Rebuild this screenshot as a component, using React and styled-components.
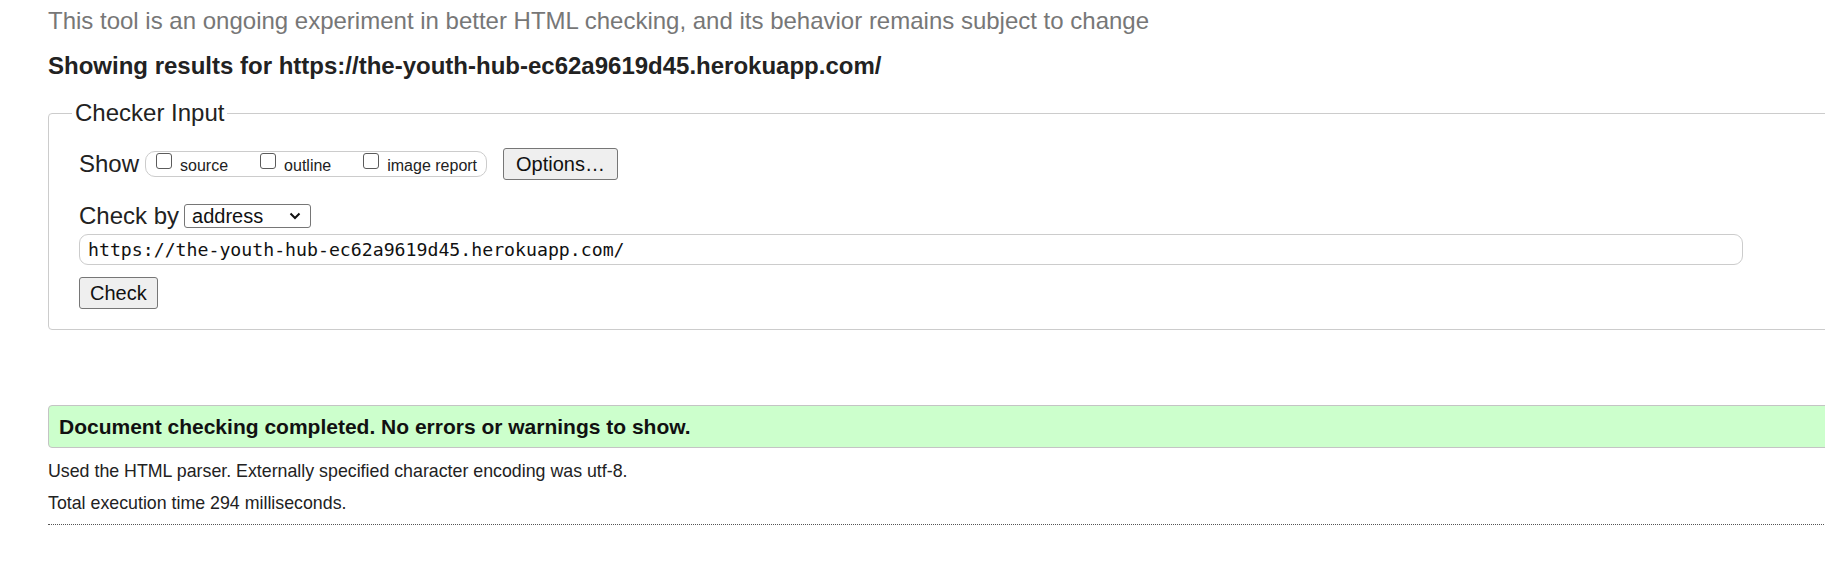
import React from "react";
import styled, { createGlobalStyle } from "styled-components";

const GlobalStyle = createGlobalStyle`
  html, body {
    margin: 0;
    padding: 0;
    background: #fff;
    overflow: hidden;
  }
  body {
    font-family: "Liberation Sans", Arial, sans-serif;
    color: #222;
  }
`;

const checkboxes = ["source", "outline", "image report"];
const url = "https://the-youth-hub-ec62a9619d45.herokuapp.com/";

const App = () => {
  return (
    <Page>
      <GlobalStyle />
      <Intro>
        This tool is an ongoing experiment in better HTML checking, and its
        behavior remains subject to change
      </Intro>
      <Heading>Showing results for {url}</Heading>
      <Fieldset>
        <Legend>Checker Input</Legend>
        <ShowRow>
          <Label>Show</Label>
          <Pill>
            {checkboxes.map((item) => (
              <Option key={item}>
                <Box type="checkbox" />
                <OptionText>{item}</OptionText>
              </Option>
            ))}
          </Pill>
          <Button wide>Options…</Button>
        </ShowRow>
        <CheckByRow>
          <Label>Check by</Label>
          <SelectWrap>
            <Select defaultValue="address">
              <option value="address">address</option>
              <option value="file">file upload</option>
              <option value="text">text input</option>
            </Select>
            <Chevron viewBox="0 0 12 8">
              <path d="M1.5 1.5 L6 6 L10.5 1.5" />
            </Chevron>
          </SelectWrap>
        </CheckByRow>
        <UrlInput defaultValue={url} />
        <Button>Check</Button>
      </Fieldset>
      <Success>Document checking completed. No errors or warnings to show.</Success>
      <Note gap="13px">
        Used the HTML parser. Externally specified character encoding was utf-8.
      </Note>
      <Note gap="11px">Total execution time 294 milliseconds.</Note>
      <Rule />
    </Page>
  );
};

const Page = styled.div`
  width: 1830px;
  padding-left: 48px;
`;

const Intro = styled.p`
  font-size: 24px;
  line-height: 28px;
  color: #777;
  margin: 7px 0 0;
  white-space: nowrap;
`;

const Heading = styled.h2`
  font-size: 24px;
  line-height: 28px;
  font-weight: bold;
  color: #222;
  margin: 17px 0 0;
  white-space: nowrap;
`;

const Fieldset = styled.fieldset`
  margin: 19px 0 0;
  padding: 21px 30px 20px;
  border: 1px solid #ccc;
  border-radius: 4px;
  min-width: 0;
`;

const Legend = styled.legend`
  font-size: 24px;
  line-height: 28px;
  padding: 0 3px;
  margin-left: -7px;
  color: #222;
`;

const ShowRow = styled.div`
  display: flex;
  align-items: center;
  height: 32px;
`;

const Label = styled.span`
  font-size: 24px;
  line-height: 28px;
  color: #222;
  margin-right: 6px;
`;

const Pill = styled.div`
  display: flex;
  align-items: flex-end;
  height: 24px;
  padding: 0 9px 0 10px;
  border: 1px solid #ccc;
  border-radius: 10px;
  margin-right: 16px;
`;

const Option = styled.label`
  display: flex;
  align-items: flex-end;
  height: 24px;
  & + & {
    margin-left: 32px;
  }
`;

const Box = styled.input`
  appearance: none;
  width: 16px;
  height: 16px;
  margin: 1px 8px 0 0;
  align-self: flex-start;
  border: 1px solid #5b5b5b;
  border-radius: 3px;
  background: #fff;
`;

const OptionText = styled.span`
  font-size: 16px;
  line-height: 20px;
  color: #222;
`;

const Button = styled.button`
  font-family: "Liberation Sans", Arial, sans-serif;
  font-size: 20px;
  height: 32px;
  padding: 0 ${({ wide }) => (wide ? "12px" : "10px")};
  background: #efefef;
  color: #111;
  border: 1px solid #767676;
  border-radius: 3px;
  margin: 0;
`;

const CheckByRow = styled.div`
  display: flex;
  align-items: center;
  height: 28px;
  margin-top: 22px;
  & > span {
    margin-right: 5px;
  }
`;

const SelectWrap = styled.span`
  position: relative;
  display: inline-block;
`;

const Select = styled.select`
  appearance: none;
  width: 127px;
  height: 24px;
  padding: 0 0 0 7px;
  font-family: "Liberation Sans", Arial, sans-serif;
  font-size: 20px;
  color: #111;
  background: #fff;
  border: 1px solid #767676;
  border-radius: 3px;
  display: block;
`;

const Chevron = styled.svg`
  position: absolute;
  right: 10px;
  top: 8px;
  width: 12px;
  height: 8px;
  fill: none;
  stroke: #111;
  stroke-width: 2;
  pointer-events: none;
`;

const UrlInput = styled.input`
  display: block;
  box-sizing: border-box;
  width: 1664px;
  height: 31px;
  margin: 4px 0 12px;
  padding: 0 8px;
  font-family: "DejaVu Sans Mono", monospace;
  font-size: 18.2px;
  color: #111;
  border: 1px solid #ccc;
  border-radius: 9px;
  outline: none;
`;

const Success = styled.div`
  margin-top: 75px;
  height: 43px;
  box-sizing: border-box;
  display: flex;
  align-items: center;
  padding-left: 10px;
  background: #ccffcc;
  border: 1px solid #c4c4c4;
  border-radius: 4px;
  font-size: 21px;
  font-weight: bold;
  color: #111;
  white-space: nowrap;
`;

const Note = styled.p`
  font-size: 17.8px;
  line-height: 21px;
  color: #222;
  margin: ${({ gap }) => gap} 0 0;
  white-space: nowrap;
`;

const Rule = styled.hr`
  margin: 10px 0 0;
  border: 0;
  border-top: 1px dotted #555;
  height: 0;
`;

export default App;
